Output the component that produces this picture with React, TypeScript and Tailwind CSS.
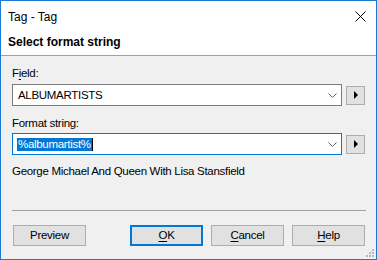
import React from "react"

const font = { fontFamily: '"Liberation Sans", Arial, sans-serif' }

function Chevron() {
    return (
        <svg width="9" height="5" viewBox="0 0 9 5" className="shrink-0">
            <path d="M0.5 0.5 L4.5 4.5 L8.5 0.5" fill="none" stroke="#606060" strokeWidth="1" />
        </svg>
    )
}

function ArrowButton() {
    return (
        <div className="w-[19px] h-[19px] border border-[#adadad] bg-[#e1e1e1] flex items-center justify-center shrink-0">
            <svg width="4" height="8" viewBox="0 0 4 8">
                <path d="M0 0 L4 4 L0 8 Z" fill="#000" />
            </svg>
        </div>
    )
}

function Combo({ focused, children }: { focused?: boolean; children: React.ReactNode }) {
    return (
        <div className="flex items-center gap-[4px]">
            <div
                className={
                    "w-[330px] h-[22px] bg-white border flex items-center pl-[4px] pr-[4px] " +
                    (focused ? "border-[#0078d7]" : "border-[#7a7a7a]")
                }
            >
                <div className="flex-1 flex items-center">{children}</div>
                <Chevron />
            </div>
            <ArrowButton />
        </div>
    )
}

function Btn({ label, under, primary }: { label: string; under?: number; primary?: boolean }) {
    return (
        <div
            className={
                "w-[73px] h-[21px] bg-[#e1e1e1] flex items-center justify-center text-black " +
                (primary ? "border-2 border-[#0078d7]" : "border border-[#adadad]")
            }
        >
            {under === undefined ? label : (
                <span>
                    {label.slice(0, under)}
                    <span className="underline underline-offset-[2px]">{label[under]}</span>
                    {label.slice(under + 1)}
                </span>
            )}
        </div>
    )
}

export default function App() {
    return (
        <div style={font} className="w-[377px] h-[260px] border border-[#1a7bd4] flex flex-col bg-[#f0f0f0] text-black">
            {/* Title bar */}
            <div className="h-[29px] bg-white flex items-center justify-between pl-[7px] pr-[10px]">
                <span className="text-[12px] leading-[15px] mt-[3px]">Tag - Tag</span>
                <svg width="11" height="11" viewBox="0 0 11 11" className="mt-[2px]">
                    <path d="M0.5 0.5 L10.5 10.5 M10.5 0.5 L0.5 10.5" stroke="#000" strokeWidth="1" />
                </svg>
            </div>

            {/* Header */}
            <div className="h-[26px] bg-white border-b border-[#a0a0a0] pl-[7px] flex items-start">
                <span className="text-[12px] leading-[15px] font-bold mt-[5px]">Select format string</span>
            </div>

            {/* Body */}
            <div className="flex-1 flex flex-col pl-[11px] text-[11.5px] tracking-[-0.3px] leading-[15px]">
                <div className="mt-[10px]">
                    F<span className="underline underline-offset-[2px]">i</span>eld:
                </div>
                <div className="mt-[3px]">
                    <Combo>
                        <span className="pl-[1px]">ALBUMARTISTS</span>
                    </Combo>
                </div>

                <div className="mt-[10px]">Format string:</div>
                <div className="mt-[2px]">
                    <Combo focused>
                        <span className="bg-[#0078d7] text-white leading-[13px] h-[13px] px-[1px]">%albumartist%</span>
                        <span className="w-px h-[13px] bg-black" />
                    </Combo>
                </div>

                <div className="mt-[9px]">George Michael And Queen With Lisa Stansfield</div>

                <div className="mt-[31px] w-[354px] h-px bg-[#a0a0a0]" />

                <div className="mt-[14px] flex items-center w-[353px] pl-[1px]">
                    <Btn label="Preview" />
                    <div className="ml-[44px] flex gap-[8px]">
                        <Btn label="OK" under={0} primary />
                        <Btn label="Cancel" under={0} />
                        <Btn label="Help" under={0} />
                    </div>
                </div>

                <div className="flex-1 flex items-end justify-end pr-[2px] pb-[2px]">
                    <svg width="8" height="8" viewBox="0 0 8 8">
                        <g fill="#b8b8b8">
                            <rect x="6" y="0" width="2" height="2" />
                            <rect x="3" y="3" width="2" height="2" />
                            <rect x="6" y="3" width="2" height="2" />
                            <rect x="0" y="6" width="2" height="2" />
                            <rect x="3" y="6" width="2" height="2" />
                            <rect x="6" y="6" width="2" height="2" />
                        </g>
                    </svg>
                </div>
            </div>
        </div>
    )
}
